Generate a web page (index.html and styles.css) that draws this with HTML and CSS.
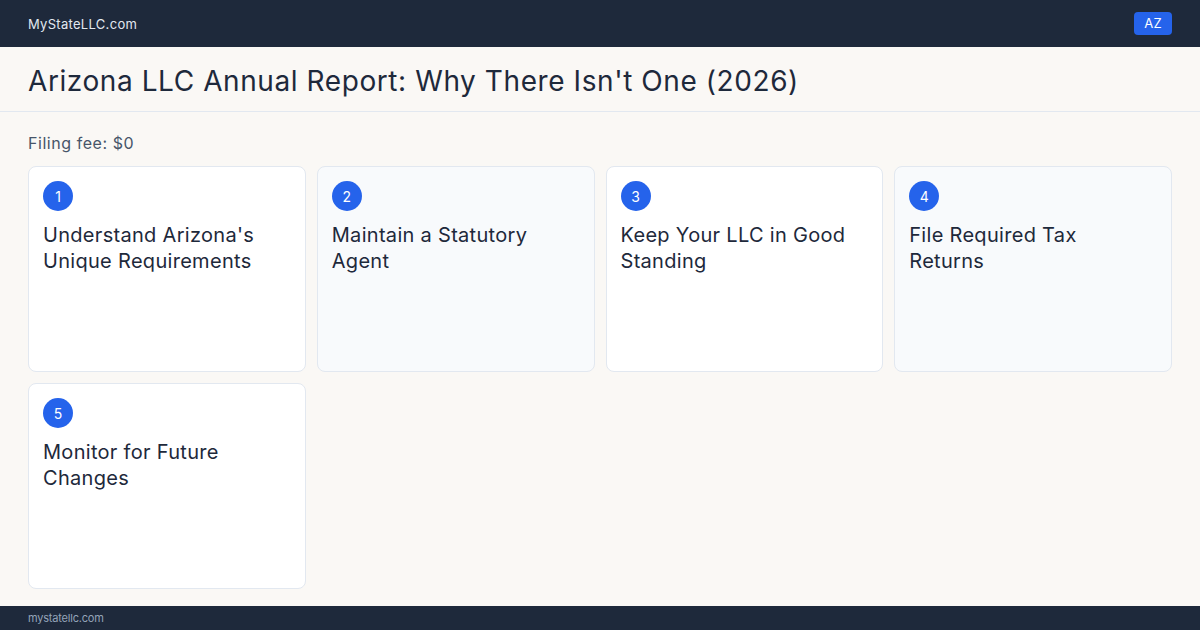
FILE: index.html
```html
<!DOCTYPE html>
<html lang="en">
<head>
    <meta charset="UTF-8">
    <meta name="viewport" content="width=device-width, initial-scale=1.0">
    <title>Arizona LLC Annual Report</title>
    <link rel="stylesheet" href="styles.css">
</head>
<body>
    <header class="topbar">
        <span class="brand">MyStateLLC.com</span>
        <span class="state-badge">AZ</span>
    </header>
    <section class="page-head">
        <h1>Arizona LLC Annual Report: Why There Isn't One (2026)</h1>
    </section>
    <main class="content">
        <p class="fee">Filing fee: $0</p>
        <div class="steps">
            <div class="step">
                <span class="step-num">1</span>
                <h2>Understand Arizona's Unique Requirements</h2>
            </div>
            <div class="step alt">
                <span class="step-num">2</span>
                <h2>Maintain a Statutory Agent</h2>
            </div>
            <div class="step">
                <span class="step-num">3</span>
                <h2>Keep Your LLC in Good Standing</h2>
            </div>
            <div class="step alt">
                <span class="step-num">4</span>
                <h2>File Required Tax Returns</h2>
            </div>
            <div class="step">
                <span class="step-num">5</span>
                <h2>Monitor for Future Changes</h2>
            </div>
        </div>
    </main>
    <footer class="footer">mystatellc.com</footer>
</body>
</html>
```

FILE: styles.css
```css
body {
    font-family: Inter, "Noto Sans", sans-serif;
    margin: 0;
    height: 630px;
    display: flex;
    flex-direction: column;
    background-color: #faf8f5;
    color: #1e293b;
    overflow: hidden;
}
.topbar {
    height: 47px;
    background-color: #1e293b;
    display: flex;
    align-items: center;
    justify-content: space-between;
    padding: 0 28px;
    flex-shrink: 0;
}
.brand {
    color: #e2e8f0;
    font-size: 13px;
    letter-spacing: 0.3px;
}
.state-badge {
    background-color: #2563eb;
    color: #fff;
    font-size: 13px;
    padding: 4px 10px;
    border-radius: 4px;
    line-height: 15px;
    letter-spacing: 0.3px;
}
.page-head {
    padding: 0 28px;
    height: 64px;
    display: flex;
    align-items: center;
    border-bottom: 1px solid #e2e8f0;
    flex-shrink: 0;
}
.page-head h1 {
    margin: 0;
    font-size: 28px;
    font-weight: 400;
    letter-spacing: 0.58px;
    color: #1e293b;
    position: relative;
    top: 2px;
}
.content {
    flex: 1;
    padding: 20px 28px 0;
}
.fee {
    margin: 0 0 12px;
    font-size: 16px;
    line-height: 22px;
    letter-spacing: 0.55px;
    color: #475569;
}
.steps {
    display: grid;
    grid-template-columns: repeat(4, 1fr);
    gap: 11px;
}
.step {
    height: 206px;
    box-sizing: border-box;
    background-color: #fff;
    border: 1px solid #e2e8f0;
    border-radius: 8px;
    padding: 14px 14px;
}
.step.alt {
    background-color: #f8fafc;
}
.step-num {
    display: flex;
    align-items: center;
    justify-content: center;
    width: 30px;
    height: 30px;
    border-radius: 50%;
    background-color: #2563eb;
    color: #fff;
    font-size: 14px;
}
.step h2 {
    margin: 11px 0 0;
    font-size: 20px;
    font-weight: 400;
    line-height: 26px;
    letter-spacing: 0.3px;
    color: #1e293b;
}
.footer {
    height: 24px;
    background-color: #1e293b;
    color: #94a3b8;
    font-size: 11px;
    letter-spacing: -0.2px;
    padding: 0 28px;
    display: flex;
    align-items: center;
    flex-shrink: 0;
}
```
